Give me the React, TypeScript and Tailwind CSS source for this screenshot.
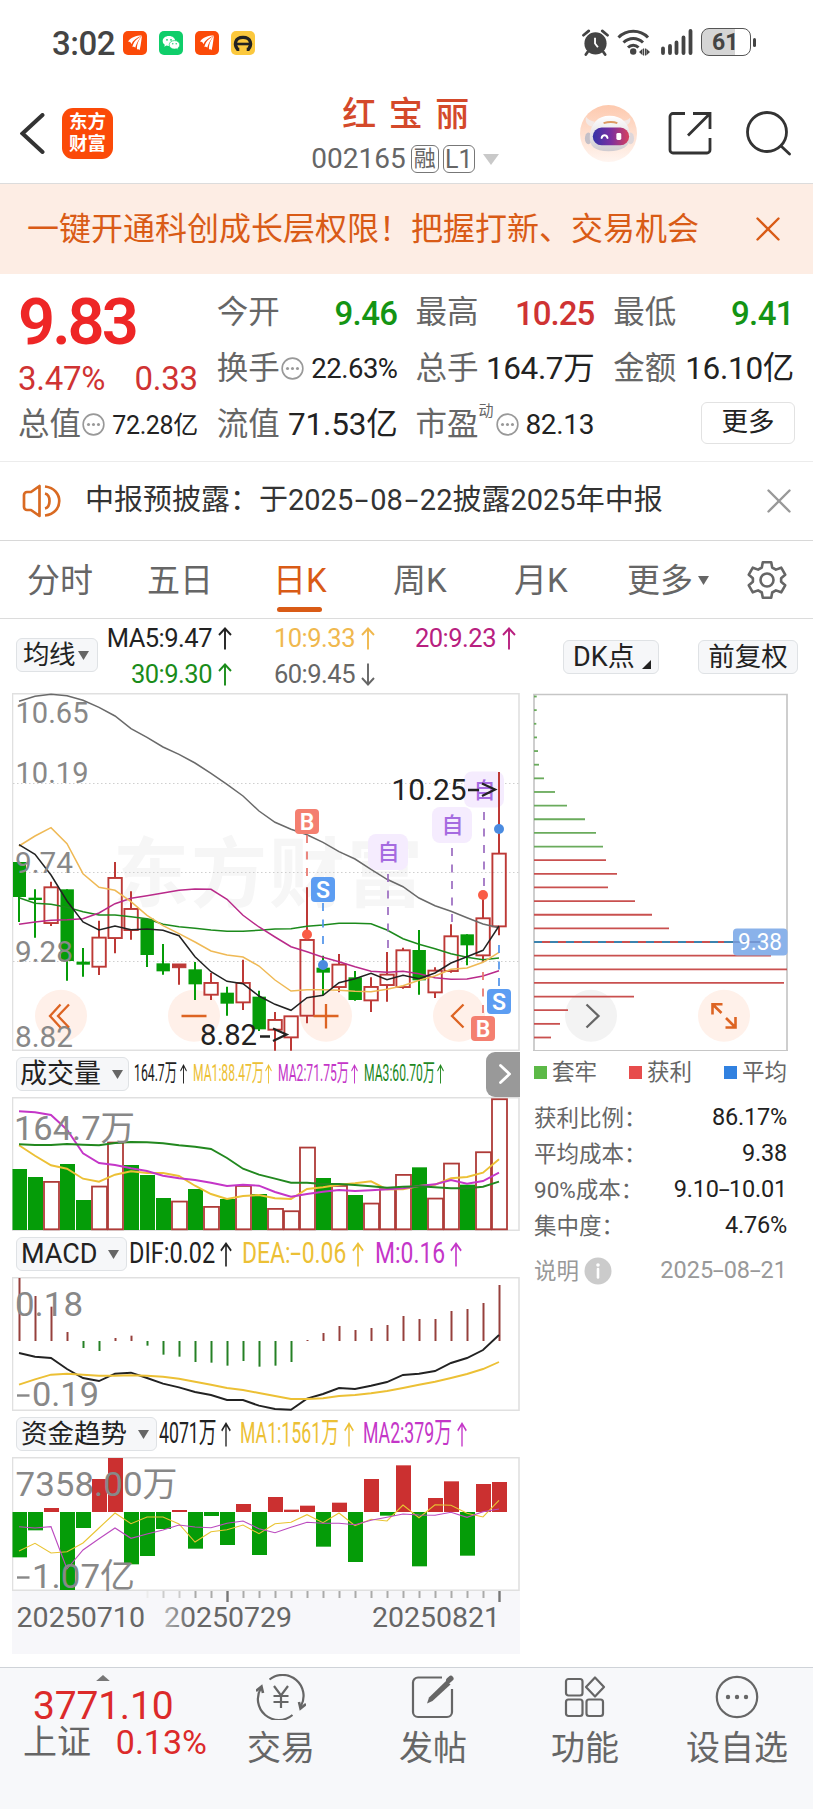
import React from "react";

const FONT = "font-['Roboto','Noto_Sans_CJK_SC',sans-serif]";

const cx = (i: number) => 19 + 16 * i;
const line = (values: number[], y: (v: number) => number) =>
  values.map((v, i) => `${cx(i)},${y(v).toFixed(1)}`).join(" ");

/* ---------- data ---------- */

type Kind = "g" | "r" | "f";
const candles: [Kind, number, number, number, number][] = [
  ["g", 186, 291, 186, 366], ["g", 293, 300, 268, 413], ["r", 261, 370, 245, 378], ["g", 268, 483, 268, 542],
  ["g", 485, 494, 444, 530], ["r", 412, 501, 362, 525], ["r", 233, 415, 186, 460], ["r", 326, 391, 274, 419],
  ["g", 356, 465, 356, 501], ["g", 490, 514, 432, 524], ["f", 492, 503, 492, 554], ["g", 508, 553, 486, 600],
  ["r", 548, 585, 519, 600], ["g", 578, 611, 560, 647], ["r", 548, 608, 479, 630], ["g", 590, 688, 572, 693],
  ["r", 659, 690, 636, 752], ["r", 648, 713, 648, 752], ["r", 419, 648, 262, 670], ["g", 503, 518, 467, 586],
  ["r", 493, 562, 462, 577], ["g", 532, 600, 513, 602], ["r", 560, 602, 532, 636], ["r", 523, 556, 456, 605],
  ["r", 450, 562, 443, 566], ["g", 450, 541, 390, 584], ["r", 511, 578, 502, 594], ["r", 408, 514, 373, 518],
  ["g", 403, 436, 403, 496], ["r", 354, 467, 286, 485], ["r", 160, 380, -84, 406],
];
const ma5 = [134, 163, 225, 303, 366, 390, 378, 389, 387, 391, 407, 470, 515, 544, 551, 588, 613, 631, 593, 586, 548, 536, 520, 539, 526, 536, 519, 489, 470, 451, 378];
const ma10 = [138, 108, 83, 131, 221, 262, 271, 305, 346, 377, 401, 426, 453, 465, 471, 498, 540, 573, 569, 569, 571, 574, 575, 568, 557, 541, 528, 508, 504, 487, 457];
const ma20 = [373, 366, 361, 359, 356, 339, 311, 295, 287, 279, 271, 267, 268, 298, 346, 381, 411, 440, 455, 472, 485, 500, 514, 517, 514, 521, 533, 538, 537, 528, 512];
const ma30 = [293, 310, 313, 322, 335, 345, 345, 350, 356, 373, 380, 385, 390, 394, 394, 391, 387, 386, 379, 375, 370, 370, 371, 390, 416, 433, 446, 461, 472, 479, 474];
const ma60 = [-296, -311, -317, -313, -299, -278, -252, -214, -188, -159, -137, -111, -80, -47, -12, 33, 67, 88, 104, 127, 155, 177, 208, 238, 260, 294, 317, 334, 353, 372, 383];

const volume: [Kind, number][] = [
  ["g", 357], ["g", 381], ["r", 393], ["g", 342], ["g", 450], ["r", 407], ["r", 275], ["g", 345], ["g", 375], ["g", 444],
  ["r", 452], ["g", 417], ["r", 468], ["g", 447], ["r", 405], ["g", 432], ["r", 474], ["r", 481], ["r", 290], ["g", 384],
  ["r", 405], ["g", 435], ["r", 458], ["r", 415], ["r", 372], ["g", 352], ["r", 443], ["r", 338], ["g", 404], ["r", 304], ["r", 145],
];
const vol1 = [286, 317, 346, 356, 386, 395, 374, 364, 369, 369, 378, 407, 432, 447, 438, 435, 445, 447, 417, 412, 404, 400, 394, 418, 418, 408, 404, 385, 381, 368, 328];
const vol2 = [184, 187, 195, 239, 310, 339, 345, 355, 363, 377, 385, 390, 398, 408, 404, 407, 426, 440, 432, 425, 420, 423, 421, 418, 415, 408, 403, 390, 401, 393, 368];
const vol3 = [283, 285, 285, 282, 284, 286, 279, 276, 277, 280, 286, 290, 297, 324, 356, 374, 386, 398, 398, 402, 402, 405, 409, 413, 410, 409, 412, 415, 415, 410, 395];

const macd = [684, 738, 770, 846, 894, 903, 864, 857, 887, 914, 920, 936, 938, 947, 933, 950, 947, 936, 870, 849, 828, 840, 834, 825, 798, 807, 807, 783, 777, 759, 705];
const dif = [909, 920, 924, 957, 984, 993, 971, 968, 984, 1001, 1012, 1026, 1035, 1050, 1050, 1067, 1077, 1079, 1046, 1032, 1014, 1017, 1007, 996, 975, 971, 963, 939, 924, 900, 855];
const dea = [1004, 988, 974, 971, 974, 977, 977, 976, 977, 980, 986, 995, 1004, 1014, 1020, 1029, 1038, 1047, 1047, 1045, 1038, 1035, 1030, 1023, 1014, 1004, 995, 984, 972, 957, 936];

const fund = [472, 391, 324, 570, 384, 237, 174, 493, 468, 387, 330, 446, 348, 435, 312, 465, 291, 329, 317, 440, 308, 486, 237, 347, 196, 499, 294, 244, 467, 252, 246];
const fund1 = [453, 430, 459, 455, 429, 384, 339, 371, 351, 351, 372, 426, 395, 389, 375, 401, 371, 367, 344, 368, 339, 377, 358, 363, 315, 353, 314, 316, 340, 351, 301];
const fund2 = [380, 384, 380, 507, 450, 416, 384, 415, 402, 390, 375, 381, 383, 370, 363, 386, 398, 382, 367, 370, 370, 374, 361, 352, 342, 345, 346, 337, 352, 335, 327];

const chips = [2.7, 2.7, 2.3, 3, 4, 5, 10, 21, 33, 51, 62, 69, 72, 83, 74, 101, 118, 135, 226, 237, 253, 250, 100, 34, 26, 17];

/* ---------- small parts ---------- */

function Arrow({ down, className = "h-[23px] w-[14px]" }: { down?: boolean; className?: string }) {
  return (
    <svg viewBox="0 0 14 23" preserveAspectRatio="none" className={`shrink-0 ${className}`} fill="none" stroke="currentColor" strokeWidth="1.9">
      <path d={down ? "M7 .5V21.5M1 15l6 6.5 6-6.5" : "M7 22.5V1.5M1 8l6-6.5L13 8"} />
    </svg>
  );
}

function Tri({ className = "" }: { className?: string }) {
  return (
    <svg viewBox="0 0 10 9" className={`h-[9px] w-[11px] shrink-0 ${className}`} preserveAspectRatio="none" fill="currentColor">
      <path d="M0 0h10L5 9z" />
    </svg>
  );
}

/* Hyphens are drawn wider than the font's own. */
function Wide({ text, dash = "px-[3px]" }: { text: string; dash?: string }) {
  return (
    <>
      {text.split("-").map((part, i) => (
        <React.Fragment key={i}>
          {i > 0 && <span className={`inline-block scale-x-[1.7] ${dash}`}>-</span>}
          {part}
        </React.Fragment>
      ))}
    </>
  );
}

function Dots() {
  return (
    <svg viewBox="0 0 24 24" className="-mt-[2px] ml-[1px] size-[23px] shrink-0">
      <circle cx="12" cy="12" r="10.8" fill="none" stroke="#999" strokeWidth="1.7" />
      <g fill="#999"><circle cx="6.8" cy="12" r="1.6" /><circle cx="12" cy="12" r="1.6" /><circle cx="17.2" cy="12" r="1.6" /></g>
    </svg>
  );
}

function Cross({ className = "" }: { className?: string }) {
  return (
    <svg viewBox="0 0 24 24" className={`size-[24px] shrink-0 ${className}`} fill="none" stroke="currentColor" strokeWidth="2.4" strokeLinecap="round">
      <path d="M1.5 1.5l21 21M22.5 1.5l-21 21" />
    </svg>
  );
}

function EastIcon() {
  return (
    <div className="size-6 rounded-[5px] bg-[#fb4a08]">
      <svg viewBox="0 0 24 24" className="size-6" fill="#fff">
        <path d="M5 10.500C8 6.500 13 4.600 19 4.600 13.600 7 10 9.200 8.300 13.200 8 11.500 7 10.500 5 10.500z" />
        <path d="M9.400 16.200C10 11.500 14 7.200 19 4.800 15.600 8.600 13.500 12 12.200 16.800 11.600 15.800 10.500 15.600 9.400 16.200z" />
        <path d="M14 18.600C13.600 13 16 8.600 19 4.800 18.300 8.600 18.200 13 16.600 19.200 16 18.200 15 18 14 18.600z" />
      </svg>
    </div>
  );
}

function Pill({ children, className = "" }: { children: React.ReactNode; className?: string }) {
  return (
    <button className={`flex h-[34px] shrink-0 items-center rounded-md border border-[#dfe2e5] bg-[#f6f7f9] text-[27px] leading-none whitespace-nowrap text-[#222] ${className}`}>
      {children}
    </button>
  );
}

function Stat({ label, value, dots, sup, className = "text-[32px] text-[#222]" }: {
  label: string; value: string; dots?: boolean; sup?: string; className?: string;
}) {
  return (
    <div className="flex h-14 items-center whitespace-nowrap">
      <span className="-ml-[1px] text-[31.500px] leading-none text-[#666]">{label}</span>
      {sup && <span className="-mt-7 w-[16px] text-[15px] leading-none text-[#666]">{sup}</span>}
      {dots && <Dots />}
      <span className={`ml-auto leading-none ${className}`}>{value}</span>
    </div>
  );
}

function Squeezed({ box, scale, text, size, arrow, className }: {
  box: string; scale: string; text: string; size: string; arrow: string; className: string;
}) {
  return (
    <div className={`flex shrink-0 items-center ${className}`}>
      <div className={box}>
        <span className={`inline-block origin-left whitespace-nowrap leading-none ${size} ${scale}`}><Wide text={text} /></span>
      </div>
      <Arrow className={arrow} />
    </div>
  );
}

function Frame({ top, bottom }: { top: number; bottom: number }) {
  return <rect x="12.500" y={top + 0.7} width="506.500" height={bottom - top - 1.4} fill="none" stroke="#e0e0e0" strokeWidth="1.600" />;
}

function Label({ x, y, w, size = 30, fill = "#888", children }: {
  x: number; y: number; w: number; size?: number; fill?: string; children: string;
}) {
  return <text x={x} y={y} fontSize={size} fill={fill} textLength={w} lengthAdjust="spacingAndGlyphs">{children}</text>;
}

function Mark({ x, y, kind }: { x: number; y: number; kind: "B" | "S" }) {
  return (
    <g>
      <rect x={x} y={y} width="24" height="25" rx="4" fill={kind === "B" ? "#f47f70" : "#5c9df2"} />
      <text x={x + 12} y={y + 20.500} textAnchor="middle" fontSize="23" fontWeight="600" fill="#fff">{kind}</text>
    </g>
  );
}

/* ---------- charts ---------- */

function PriceChart() {
  const y = (v: number) => 800 + v / 3;
  return (
    <svg viewBox="12 693 508 358" className="block h-[358px] w-[508px]">
      <text x="113" y="901" fontSize="76" fontWeight="700" fill="#f6f6f6" textLength="310">东方财富</text>
      <Frame top={693} bottom={1051} />
      <g stroke="#cfcfcf" strokeWidth="1.200" strokeDasharray="1.500 2.500">
        <path d="M13 783.500H519M13 872.500H519M13 961.500H519" />
      </g>
      {[61, 194, 326, 459].map((x) => <circle key={x} cx={x} cy="1015.700" r="26" fill="#fff0e9" />)}
      <g fill="#f5ecfe">
        <rect x="368" y="834" width="40" height="36" rx="8" />
        <rect x="432" y="807" width="40" height="36" rx="8" />
        <rect x="464" y="771.500" width="40" height="36" rx="8" />
      </g>
      <g fontSize="22" fill="#a56be0" fontWeight="500" textAnchor="middle">
        <text x="388.500" y="860">自</text><text x="452.500" y="833">自</text><text x="484.500" y="798">自</text>
      </g>
      {candles.map(([k, t, b, hi, lo], i) => {
        const c = k === "g" ? "#059c08" : "#bd3936";
        return (
          <g key={i}>
            <path d={`M${cx(i)} ${y(hi)}V${k === "r" ? y(t) : y(lo)}${k === "r" ? `M${cx(i)} ${y(b)}V${y(lo)}` : ""}`} stroke={c} strokeWidth="2" />
            {k === "r"
              ? <rect x={cx(i) - 6.600} y={y(t) + 0.300} width="13.400" height={y(b) - y(t) - 0.600} fill="none" stroke={c} strokeWidth="1.900" />
              : <rect x={Math.max(13, cx(i) - 6.500)} y={y(t)} width={i === 0 ? 13 : 13.400} height={y(b) - y(t)} fill={c} stroke={c} strokeWidth={k === "f" ? 1 : 0} />}
          </g>
        );
      })}
      <g fill="none" strokeWidth="1.500">
        <polyline points={line(ma60, y)} stroke="#6a6a6a" />
        <polyline points={line(ma30, y)} stroke="#1c8a1c" />
        <polyline points={line(ma20, y)} stroke="#b92a8a" />
        <polyline points={line(ma10, y)} stroke="#efb955" />
        <polyline points={line(ma5, y)} stroke="#222" />
      </g>
      <g strokeWidth="1.700" strokeDasharray="8 8.500">
        <path d="M388 870V952M452 844V925M484 808V890" stroke="#9b6bc0" strokeDashoffset="-4" />
        <path d="M307 835V880M483 972V1015" stroke="#e8736a" />
        <path d="M323 903V948M499 945V988" stroke="#4f93ea" />
      </g>
      <g fill="#fa5c45"><circle cx="307" cy="934.500" r="5" /><circle cx="483" cy="895" r="5" /></g>
      <g fill="#4a8be0"><circle cx="323" cy="965" r="5" /><circle cx="499" cy="829" r="5" /></g>
      <Label x={15.5} y={722.5} w={73}>10.65</Label>
      <Label x={15.5} y={782.5} w={73}>10.19</Label>
      <Label x={15} y={872.5} w={58}>9.74</Label>
      <Label x={15} y={961.5} w={58}>9.28</Label>
      <Label x={15} y={1046.5} w={58}>8.82</Label>
      <Label x={391.5} y={800} w={75} fill="#222">10.25</Label>
      <Label x={200} y={1045} w={57} fill="#222">8.82</Label>
      <g fill="none" stroke="#222" strokeWidth="2.300">
        <path d="M468 790H479M482 783.500L495 789.500 482 796" />
        <path d="M260 1036.500H270M273 1028.500L286.500 1034.500 273 1041" />
      </g>
      <g fill="none" stroke="#dd6423" strokeWidth="2.300">
        <path d="M60.500 1004.500L50 1016l10.500 11.500M69 1004.500L58 1016l11 11.500" />
        <path d="M181.500 1016H206.500M313.500 1016H338.500M326 1004V1028.500" />
        <path d="M463.500 1004.500L452 1016l11.500 11.500" />
      </g>
      <Mark x={295} y={809} kind="B" />
      <Mark x={311} y={877} kind="S" />
      <Mark x={471} y={1016} kind="B" />
      <Mark x={487} y={989} kind="S" />
    </svg>
  );
}

function VolumeChart() {
  const y = (v: number) => 1050 + v / 3;
  return (
    <svg viewBox="12 1097 508 134" className="block h-[134px] w-[508px]">
      <Frame top={1097} bottom={1231} />
      {volume.map(([k, v], i) =>
        k === "g"
          ? <rect key={i} x={Math.max(12.500, cx(i) - 7)} y={y(v)} width={i === 0 ? 14.500 : 15} height={1230 - y(v)} fill="#059c08" />
          : <rect key={i} x={cx(i) - 7} y={y(v) + 0.900} width="15" height={1229.300 - y(v) - 0.900} fill="none" stroke="#ae3b38" strokeWidth="1.800" />
      )}
      <g fill="none" strokeWidth="1.900">
        <polyline points={line(vol1, y)} stroke="#ecc035" />
        <polyline points={line(vol2, y)} stroke="#c436c8" />
        <polyline points={line(vol3, y)} stroke="#22881f" />
      </g>
      <Label x={14} y={1139.5} w={121} size={34}>164.7万</Label>
    </svg>
  );
}

function MacdChart() {
  const y = (v: number) => 1050 + v / 3;
  return (
    <svg viewBox="12 1277 508 134" className="block h-[134px] w-[508px]">
      <Frame top={1277} bottom={1411} />
      {macd.map((v, i) => (
        <path key={i} d={`M${cx(i) + 0.5} 1341V${y(v)}`} stroke={v > 873 ? "#258025" : "#96403c"} strokeWidth="2" />
      ))}
      <g fill="none" strokeWidth="1.900">
        <polyline points={line(dif, y)} stroke="#222" />
        <polyline points={line(dea, y)} stroke="#ecc035" />
      </g>
      <Label x={15} y={1315.500} w={68} size={34}>0.18</Label>
      <path d="M17 1395.500H29.500" stroke="#888" strokeWidth="2.400" />
      <Label x={32} y={1405.500} w={67} size={34}>0.19</Label>
    </svg>
  );
}

function FundChart() {
  const y = (v: number) => 1400 + v / 3;
  return (
    <svg viewBox="12 1457 508 134" className="block h-[134px] w-[508px]">
      <Frame top={1457} bottom={1591} />
      {fund.map((v, i) => (
        <rect key={i} x={Math.max(12.500, cx(i) - 7)} y={Math.min(1512, y(v))} width={i === 0 ? 14.500 : 15} height={Math.abs(1512 - y(v))} fill={v > 336 ? "#059c08" : "#cb3030"} />
      ))}
      <g fill="none" strokeWidth="1.100">
        <polyline points={line(fund1, y)} stroke="#e9c432" />
        <polyline points={line(fund2, y)} stroke="#bb4abf" />
      </g>
      <Label x={15.5} y={1496} w={162} size={34}>7358.00万</Label>
      <path d="M17 1577.500H29.500" stroke="#888" strokeWidth="2.400" />
      <Label x={32} y={1587.500} w={103} size={34}>1.07亿</Label>
    </svg>
  );
}

function DateAxis() {
  return (
    <svg viewBox="12 1591 508 63" className="block h-[63px] w-[508px] bg-[#f7f7fa]">
      <defs>
        <linearGradient id="fade" x1="164" x2="190" y1="0" y2="0" gradientUnits="userSpaceOnUse">
          <stop offset="0" stopColor="#b5b5b5" /><stop offset="1" stopColor="#666" />
        </linearGradient>
      </defs>
      {Array.from({ length: 23 }, (_, k) => k + 8).map((i) => {
        const bold = i === 13 || i === 30;
        return <path key={i} d={`M${cx(i) + 0.5} 1591V${bold ? 1602 : 1598}`} stroke={bold ? "#777" : i < 9 ? "#ececec" : i < 11 ? "#ccc" : "#aaa"} strokeWidth={bold ? 2.400 : 2} />;
      })}
      <Label x={16.5} y={1627} w={128.5} size={28} fill="#666">20250710</Label>
      <Label x={164} y={1627} w={128} size={28} fill="url(#fade)">20250729</Label>
      <Label x={372} y={1627} w={128} size={28} fill="#666">20250821</Label>
    </svg>
  );
}

function ChipChart() {
  return (
    <svg viewBox="533 693 256 358" className="block h-[358px] w-[256px]">
      <path d="M534 1051V694.500H787V1051" fill="none" stroke="#c6c6c6" strokeWidth="1.700" />
      <path d="M533 1050.500H788" stroke="#c6c6c6" strokeWidth="1" />
      <circle cx="591" cy="1015.700" r="26" fill="#f3f3f3" />
      <circle cx="724" cy="1015.700" r="26" fill="#fff1ea" />
      {chips.map((w, i) => (
        <path key={i} d={`M534 ${696.500 + 13.640 * i}h${w}`} stroke={i < 12 ? "#6aab5c" : "#c9504f"} strokeWidth="1.800" />
      ))}
      <path d="M534 942H733" stroke="#3b83ae" strokeWidth="1.900" strokeDasharray="8 8" />
      <path d="M724 942H740" stroke="#3b83ae" strokeWidth="1.900" />
      <rect x="733" y="928.500" width="54.500" height="27" rx="4" fill="#8ab2ea" />
      <path d="M733 942H760" stroke="#6b8cc8" strokeWidth="1.500" />
      <Label x={738} y={950} w={44} size={23} fill="#fff">9.38</Label>
      <path d="M586.500 1004.500L598.500 1016l-12 11.500" fill="none" stroke="#666" strokeWidth="2.300" />
      <g fill="none" stroke="#dd6423" strokeWidth="2.600">
        <path d="M722.500 1004.200H712.500V1014.500M712.500 1004.200L721.500 1013" />
        <path d="M725.500 1027.500H735.500V1017M735.500 1027.500L726 1018" />
      </g>
    </svg>
  );
}

/* ---------- sections ---------- */

function StatusBar() {
  return (
    <div className="flex h-[84px] items-center pt-[2px] pl-[52px] text-[#444]">
      <span className="w-[71px] text-[33px] leading-none font-medium tracking-[-0.5px]">3:02</span>
      <div className="flex gap-3">
        <EastIcon />
        <div className="size-6 rounded-[5px] bg-[#0fce6a]">
          <svg viewBox="0 0 24 24" className="size-6">
            <path fill="#fff" d="M10 5c-3.800 0-6.300 2.300-6.300 5 0 1.600.8 2.900 2.100 3.800l-.5 1.900 2.100-1.100c.8.300 1.700.4 2.600.4 3.600 0 6.200-2.200 6.200-5S13.700 5 10 5z" />
            <path fill="#fff" stroke="#0fce6a" strokeWidth=".7" d="M15.500 9.600c-3.200 0-5.300 1.900-5.300 4.200 0 2.400 2.200 4.300 5.300 4.300.7 0 1.300-.1 1.900-.3l1.800 1-.4-1.700c1.200-.8 1.900-1.900 1.900-3.300 0-2.300-2.100-4.200-5.200-4.200z" />
            <g fill="#0fce6a"><circle cx="8" cy="8.800" r=".9" /><circle cx="12" cy="8.800" r=".9" /><circle cx="13.800" cy="12.700" r=".7" /><circle cx="17.200" cy="12.700" r=".7" /></g>
          </svg>
        </div>
        <EastIcon />
        <div className="size-6 rounded-[5px] bg-[#fbc83d]">
          <svg viewBox="0 0 24 24" className="size-6" fill="none" stroke="#222" strokeWidth="3.200">
            <path d="M8.300 18.300H6.500C3 14 3.500 6.300 12 6.300s9 7.700 5.500 12H15.700" /><path d="M5 13h14" strokeWidth="2.600" />
          </svg>
        </div>
      </div>
      <div className="-mt-[2px] ml-auto flex items-center pr-[57px]">
        <svg viewBox="0 0 28 28" className="h-[28px] w-[27px]" fill="#444">
          <circle cx="14" cy="15.500" r="11.500" />
          <path d="M1.500 7L7 2.500M26.500 7L21 2.500M6 24l-2 3M22 24l2 3" stroke="#444" strokeWidth="2.800" strokeLinecap="round" />
          <path d="M13.500 9.500v6l3 4" fill="none" stroke="#fff" strokeWidth="1.900" />
        </svg>
        <svg viewBox="0 0 34 28" className="ml-[8px] h-[28px] w-[34px]" fill="none" stroke="#444" strokeWidth="3">
          <path d="M1.500 9.500c8-8.300 21.500-8.300 29.500 0M6.500 14.500c5.500-5.500 14-5.500 19.500 0M11 19.500c3-3 7.500-3 10.500 0" />
          <circle cx="16.200" cy="23.500" r="3.200" fill="#444" stroke="none" />
          <path d="M22 24l3.500-3.300v6.600zM33 24l-3.500-3.300v6.600zM26 20.500h1.200v7H26zM28 20.500h1.200v7H28z" fill="#444" stroke="none" />
        </svg>
        <svg viewBox="0 0 32 28" className="ml-[10px] h-[28px] w-[32px]" stroke="#444" strokeWidth="3.800" strokeLinecap="round">
          <path d="M2 25v-4.500M9 25v-7M15.500 25V14.500M22.500 25V9.500M29.500 25V3" />
        </svg>
        <div className="ml-[8px] flex h-[28px] w-[50px] items-center overflow-hidden rounded-[8px] border-[1.5px] border-[#555] bg-linear-to-r from-[#d5d5d5] from-68% to-white to-68% pl-[10px] text-[23px] leading-none font-bold">61</div>
        <div className="ml-[2px] h-[9px] w-[3px] rounded-sm bg-[#444]" />
      </div>
    </div>
  );
}

function Header() {
  return (
    <header className="flex h-[100px] border-b border-[#dcdcdc]">
      <div className="flex w-[300px] items-center gap-[17px] pb-px pl-[20px]">
        <svg viewBox="0 0 25 41" className="h-[41px] w-[25px]" fill="none" stroke="#333" strokeWidth="4" strokeLinecap="round">
          <path d="M22.500 2L2.500 20.500l20 18.500" />
        </svg>
        <div className="flex size-[51px] flex-col items-center justify-center gap-[4px] rounded-[11px] bg-[#fb4a08] text-[18.500px] leading-[18px] font-bold text-white">
          <span>东方</span><span>财富</span>
        </div>
      </div>
      <div className="flex w-[212px] flex-col items-center">
        <h1 className="mt-[13px] text-[34px] leading-[34px] font-medium tracking-[12.500px] whitespace-nowrap text-[#d4492a]"><span className="-mr-[12px]">红宝丽</span></h1>
        <div className="mt-[13px] -ml-[2px] flex items-center whitespace-nowrap text-[#666]">
          <span className="text-[28px] leading-[30px]">002165</span>
          <span className="ml-[5px] flex h-[28px] w-[28px] items-center justify-center rounded-[6px] border-[1.5px] border-[#777] text-[22px] leading-none">融</span>
          <span className="ml-[4px] flex h-[28px] w-[32px] items-center justify-center rounded-[6px] border-[1.5px] border-[#777] text-[25px] leading-none">L1</span>
          <svg viewBox="0 0 16 11" className="ml-[8px] h-[11px] w-[16px]" fill="#c9c9c9"><path d="M0 0h16L8 11z" /></svg>
        </div>
      </div>
      <div className="flex flex-1 items-center justify-end pr-[22px] pb-[1px]">
        <svg viewBox="0 0 58 58" className="size-[57px]">
          <defs>
            <linearGradient id="halo" x1="0" x2="0" y1="0" y2="1"><stop offset="0" stopColor="#fdc9ae" /><stop offset="1" stopColor="#fff5f0" /></linearGradient>
            <linearGradient id="visor" x1="0" x2="1"><stop offset="0" stopColor="#3434a8" /><stop offset=".5" stopColor="#7a2fa0" /><stop offset="1" stopColor="#d8405c" /></linearGradient>
            <linearGradient id="shell" x1="0" x2="0" y1="0" y2="1"><stop offset="0" stopColor="#fff" /><stop offset="1" stopColor="#cfcbd0" /></linearGradient>
          </defs>
          <circle cx="29" cy="29" r="29" fill="url(#halo)" />
          <ellipse cx="8.500" cy="34" rx="3.500" ry="6" fill="#c4c0c8" /><ellipse cx="51.500" cy="34" rx="3.500" ry="6" fill="#ddd6da" />
          <path d="M12 22c-5-1-7-5-6-10 2 3 5 4 9 5zM46 21c4-1 6-4 5-8-2 2-4 3-7 3z" fill="#f3e9e6" />
          <path d="M30 11c13 0 20 8 21 20 .6 11-8 16-22 16S9 42 10 31c1-12 8-20 20-20z" fill="url(#shell)" />
          <path d="M24 18.500c5-1.500 10-1.500 14 0" stroke="#dd9a62" strokeWidth="2" fill="none" />
          <rect x="13" y="23" width="37" height="18" rx="9" fill="url(#visor)" />
          <path d="M22 33.500c1-3.500 5-3.500 6 0" stroke="#fff" strokeWidth="2" fill="none" strokeLinecap="round" />
          <rect x="37" y="28.500" width="5" height="7" rx="1.500" fill="#fff" />
        </svg>
        <svg viewBox="0 0 44 44" className="ml-[31px] size-[44px]" fill="none" stroke="#333" strokeWidth="2.800">
          <path d="M17 2.500H5A3 3 0 0 0 2 5.500V39a3 3 0 0 0 3 3H39a3 3 0 0 0 3-3V27M25 2.500H42V18M42 2.500L20 24.500" />
        </svg>
        <svg viewBox="0 0 45 45" className="ml-[34px] size-[45px]" fill="none" stroke="#333" strokeWidth="2.800" strokeLinecap="round">
          <circle cx="21" cy="21" r="19.500" /><path d="M35 35l8.500 8" />
        </svg>
      </div>
    </header>
  );
}

function Quote() {
  return (
    <section className="flex h-[188px] border-b border-[#ececec] px-[19px] pt-[11px]">
      <div className="w-[179px]">
        <div className="flex h-[72px] items-center text-[65px] leading-none font-semibold tracking-[-3px] text-[#ee2626]"><span className="mt-[3px] -ml-[1px]">9.83</span></div>
        <div className="flex h-[40px] items-center justify-between pt-[3px] text-[33px] leading-none tracking-[-0.3px] text-[#cf3333]"><span className="-ml-px">3.47%</span><span>0.33</span></div>
        <Stat label="总值" dots value="72.28亿" className="text-[25px] text-[#222] tracking-[-0.4px]" />
      </div>
      <div className="ml-[20px] w-[180px]">
        <Stat label="今开" value="9.46" className="text-[33px] font-medium tracking-[-0.6px] text-[#149414]" />
        <Stat label="换手" dots value="22.63%" className="text-[27.500px] tracking-[-0.5px] text-[#222]" />
        <Stat label="流值" value="71.53亿" className="text-[31.500px] tracking-[-0.2px] text-[#222]" />
      </div>
      <div className="ml-[19px] w-[178px]">
        <Stat label="最高" value="10.25" className="text-[33px] font-medium tracking-[-1px] text-[#cf3333]" />
        <Stat label="总手" value="164.7万" className="text-[31.500px] tracking-[-0.4px] text-[#222]" />
        <Stat label="市盈" sup="动" dots value="82.13" className="text-[28px] tracking-[-0.3px] text-[#222]" />
      </div>
      <div className="ml-[20px] w-[180px]">
        <Stat label="最低" value="9.41" className="text-[33px] font-medium tracking-[-0.6px] text-[#149414]" />
        <Stat label="金额" value="16.10亿" className="text-[31.500px] tracking-[-0.3px] text-[#222]" />
        <button className="mt-[5px] -mr-[1px] ml-auto flex h-[42px] w-[94px] items-center justify-center rounded-md border border-[#e2e2e2] text-[26.500px] leading-none text-[#222]"><span className="-mt-[2px]">更多</span></button>
      </div>
    </section>
  );
}

function Tabs() {
  const tabs: [string, string][] = [["分时", "w-[120px]"], ["五日", "w-[126px]"], ["日K", "w-[120px]"], ["周K", "w-[121px]"], ["月K", "w-[114px]"]];
  return (
    <nav className="flex h-[78px] items-center border-b border-[#dcdcdc] pt-[2px] pl-[27px] text-[33px] leading-none text-[#666]">
      {tabs.map(([t, w], i) => (
        <div key={t} className={`shrink-0 ${w}`}>
          <div className={`relative inline-block ${i === 2 ? "text-[#d95b16]" : ""}`}>
            <span>{t}</span>
            {i === 2 && <span className="absolute -bottom-[15px] left-[4px] h-[5px] w-[45px] rounded-full bg-[#d95b16]" />}
          </div>
        </div>
      ))}
      <span className="-ml-[1px]">更多</span>
      <Tri className="ml-[5px]" />
      <svg viewBox="0 0 40 40" className="-mt-[2px] ml-[38px] size-[40px] shrink-0" fill="none" stroke="#666" strokeWidth="2.600" strokeLinejoin="round">
        <path d="M15.800 2.200h8.400l1 5.300 3.700 2.100 5.300-1.900 4 7-4.100 3.500v3.600l4.100 3.500-4 7-5.300-1.900-3.700 2.100-1 5.300h-8.400l-1-5.300-3.700-2.100-5.300 1.900-4-7 4.100-3.500v-3.600L1.800 14.700l4-7 5.300 1.900 3.700-2.100z" />
        <circle cx="20" cy="20" r="6.500" />
      </svg>
    </nav>
  );
}

function MaItem({ text, down, className }: { text: string; down?: boolean; className: string }) {
  return (
    <div className={`flex items-center justify-end gap-[6px] ${className}`}>
      <span className="text-[25.500px] leading-none tracking-[-0.5px]">{text}</span><Arrow down={down} className="h-[23px] w-[14px] -mt-[1px]" />
    </div>
  );
}

function Toolbar() {
  return (
    <div className="flex h-[73px] pl-[16px]">
      <Pill className="mt-[18px] w-[82px] pl-[6px]"><span className="text-[26.500px] tracking-[-0.5px]">均线</span><Tri className="ml-[3px] text-[#666]" /></Pill>
      <div className="mt-[1px] grid h-[72px] grid-cols-[134px_143px_141px] grid-rows-2">
        <MaItem text="MA5:9.47" className="text-[#222]" />
        <MaItem text="10:9.33" className="text-[#f0b84e]" />
        <MaItem text="20:9.23" className="text-[#b8207f]" />
        <MaItem text="30:9.30" className="text-[#1a8c1a]" />
        <MaItem text="60:9.45" down className="text-[#666]" />
      </div>
      <Pill className="mt-[20px] ml-[47px] w-[96px] pl-[9px]">
        <span className="text-[27px]">DK点</span>
        <svg viewBox="0 0 9 9" className="mt-[14px] ml-[7px] size-[9px] shrink-0" fill="#222"><path d="M9 0v9H0z" /></svg>
      </Pill>
      <Pill className="mt-[20px] ml-[39px] w-[100px] justify-center"><span className="text-[26.500px]">前复权</span></Pill>
    </div>
  );
}

function ChipPanel() {
  const rows = [["获利比例：", "86.17%"], ["平均成本：", "9.38"], ["90%成本：", "9.10-10.01"], ["集中度：", "4.76%"]];
  return (
    <aside className="ml-[13px] w-[256px]">
      <ChipChart />
      <div className="flex h-[42px] items-center justify-between pt-[1px] pr-[2px] pl-[1px] text-[22.500px] leading-none text-[#666]">
        {[["套牢", "bg-[#5cb947]"], ["获利", "bg-[#e74c4c]"], ["平均", "bg-[#3181e0]"]].map(([t, c]) => (
          <span key={t} className="flex items-center gap-[5px]"><i className={`block size-[13px] ${c}`} />{t}</span>
        ))}
      </div>
      <div className="mt-[7px] pr-[2px] pl-[1px] text-[22.500px] leading-none">
        {rows.map(([k, v]) => (
          <div key={k} className="flex h-9 items-center justify-between whitespace-nowrap">
            <span className="text-[#666]">{k}</span><span className="text-[23.500px] tracking-[-0.2px] text-[#222]"><Wide text={v} dash="px-[2px]" /></span>
          </div>
        ))}
        <div className="mt-[5px] flex h-[44px] items-center text-[22.500px] text-[#999]">
          <span>说明</span>
          <svg viewBox="0 0 28 28" className="ml-[5px] size-[28px]"><circle cx="14" cy="14" r="13.500" fill="#cbcbcb" /><path d="M14 12v8.500" stroke="#fff" strokeWidth="2.600" strokeLinecap="round" /><circle cx="14" cy="8" r="1.800" fill="#fff" /></svg>
          <span className="ml-auto text-[23.500px]"><Wide text="2025-08-21" dash="px-[2px]" /></span>
        </div>
      </div>
    </aside>
  );
}

function BottomBar() {
  const s = { fill: "none", stroke: "#666", strokeWidth: 2.2 } as const;
  const items = [
    { t: "交易", icon: (
      <svg viewBox="0 0 50 46" className="h-[46px] w-[50px]" {...s}>
        <path d="M13.500 5.500A21 21 0 0 1 45 32M36.500 41A21 21 0 0 1 5 14" /><path d="M0 17l5.500-4.500L7 19M50 30l-5.500 4.500L43 28" strokeWidth="2.600" />
        <path d="M18 12l7 9.500 7-9.500M25 21.500V34M17.500 22h15M17.500 28h15" />
      </svg>) },
    { t: "发帖", icon: (
      <svg viewBox="0 0 44 46" className="h-[46px] w-[44px]" {...s}>
        <path d="M31 3.500H7a5 5 0 0 0-5 5V38a5 5 0 0 0 5 5H36a5 5 0 0 0 5-5V15" /><path d="M16 29.500l2-6L35.500 6.500l4 4L21.500 27z" fill="#666" stroke="none" /><path d="M37.800 6.300l2-1.800" strokeWidth="5.500" strokeLinecap="round" />
      </svg>) },
    { t: "功能", icon: (
      <svg viewBox="0 0 42 46" className="h-[46px] w-[42px]" {...s}>
        <rect x="2" y="5" width="16.500" height="16.500" rx="2.500" /><rect x="2" y="25.500" width="16.500" height="16.500" rx="2.500" /><rect x="22.500" y="25.500" width="16.500" height="16.500" rx="2.500" /><path d="M31 3.500l9 9.500-9 9.500-9-9.500z" strokeLinejoin="round" />
      </svg>) },
    { t: "设自选", icon: (
      <svg viewBox="0 0 46 46" className="size-[46px]" {...s}>
        <circle cx="23" cy="23" r="20.200" /><g fill="#666" stroke="none"><circle cx="14" cy="23" r="2.200" /><circle cx="23" cy="23" r="2.200" /><circle cx="32" cy="23" r="2.200" /></g>
      </svg>) },
  ];
  return (
    <footer className="mt-[13px] flex h-[143px] border-t border-[#cfd3d8] bg-[#f7f8fa]">
      <div className="w-[205px] shrink-0">
        <svg viewBox="0 0 16 7" className="mt-[7px] ml-[95px] h-[6px] w-[16px]" fill="#777"><path d="M8 0l8 7H0z" /></svg>
        <div className="mt-[7px] pl-[33px] text-[39px] leading-[36px] tracking-[-0.2px] text-[#dc2a2a]">3771.10</div>
        <div className="flex items-center leading-[36px]"><span className="pl-[23px] text-[34px] text-[#666]">上证</span><span className="-mr-[2px] ml-auto text-[34px] text-[#dc2a2a]">0.13%</span></div>
      </div>
      <div className="flex">
        {items.map(({ t, icon }) => (
          <div key={t} className="flex w-[152px] shrink-0 flex-col items-center">
            <div className="mt-[6px]">{icon}</div>
            <span className="mt-[10px] text-[34px] leading-[36px] whitespace-nowrap text-[#666]">{t}</span>
          </div>
        ))}
      </div>
    </footer>
  );
}

export default function App() {
  return (
    <div className={`h-[1809px] w-[813px] overflow-hidden bg-white ${FONT}`}>
      <StatusBar />
      <Header />
      <div className="flex h-[90px] items-center justify-between bg-[#fdede4] pr-[33px] pl-[27px] text-[32px] leading-none text-[#d95b16]">
        <span className="whitespace-nowrap">一键开通科创成长层权限！把握打新、交易机会</span>
        <Cross />
      </div>
      <Quote />
      <div className="flex h-[79px] items-center border-b border-[#d8d8d8] pr-[22px] pb-px pl-[22px] text-[29px] leading-none text-[#333]">
        <svg viewBox="0 0 39 34" className="h-[34px] w-[39px]" fill="none" stroke="#d96a22" strokeWidth="2.700" strokeLinejoin="round">
          <path d="M2 11a3 3 0 0 1 3-3H9L17.500 2V32L9 26H5a3 3 0 0 1-3-3z" /><path d="M23 9.500c6 1.500 6 13.500 0 15M23 2.500c19 2 19 27 0 29" />
        </svg>
        <span className="ml-[24px] whitespace-nowrap"><Wide text="中报预披露：于2025-08-22披露2025年中报" dash="px-[4.500px]" /></span>
        <Cross className="ml-auto text-[#999]" />
      </div>
      <Tabs />
      <div className="h-px" />
      <Toolbar />
      <div className="flex pl-[12px]">
        <div className="w-[508px]">
          <PriceChart />
          <div className="flex h-[46px] items-center pl-[4px]">
            <Pill className="w-[113px] pl-[3px]"><span>成交量</span><Tri className="ml-[11px] text-[#666]" /></Pill>
            <div className="ml-[5px] flex gap-[6px]">
              <Squeezed text="164.7万" box="w-[46px]" size="text-[24px]" scale="scale-x-[.51]" arrow="h-[20px] w-[7px]" className="text-[#222]" />
              <Squeezed text="MA1:88.47万" box="w-[72px]" size="text-[24px]" scale="scale-x-[.505]" arrow="h-[20px] w-[7px]" className="text-[#ecc035]" />
              <Squeezed text="MA2:71.75万" box="w-[73px]" size="text-[24px]" scale="scale-x-[.505]" arrow="h-[20px] w-[7px]" className="text-[#c436c8]" />
              <Squeezed text="MA3:60.70万" box="w-[73px]" size="text-[24px]" scale="scale-x-[.505]" arrow="h-[20px] w-[7px]" className="text-[#22881f]" />
            </div>
            <button className="ml-auto flex h-[45px] w-[34px] items-center justify-center rounded-l-[9px] bg-[#999]">
              <svg viewBox="0 0 12 20" className="ml-[3px] h-[20px] w-[12px]" fill="none" stroke="#fff" strokeWidth="2.800" strokeLinecap="round"><path d="M1.500 1.500L10.500 10l-9 8.500" /></svg>
            </button>
          </div>
          <VolumeChart />
          <div className="flex h-[46px] items-center pl-[4px]">
            <Pill className="w-[111px] pl-[4px]"><span className="text-[27px]">MACD</span><Tri className="ml-[10px] text-[#666]" /></Pill>
            <div className="ml-[2px] flex">
              <Squeezed text="DIF:0.02" box="w-[91px]" size="text-[29px]" scale="scale-x-[.81]" arrow="h-[25px] w-[12px]" className="text-[#222]" />
              <Squeezed text="DEA:-0.06" box="ml-[10px] w-[110px]" size="text-[29px]" scale="scale-x-[.79]" arrow="h-[25px] w-[12px]" className="text-[#ecc035]" />
              <Squeezed text="M:0.16" box="ml-[11px] w-[75px]" size="text-[29px]" scale="scale-x-[.79]" arrow="h-[25px] w-[12px]" className="text-[#c436c8]" />
            </div>
          </div>
          <MacdChart />
          <div className="flex h-[46px] items-center pl-[4px]">
            <Pill className="w-[141px] pl-[4px]"><span className="text-[26.500px]">资金趋势</span><Tri className="ml-[11px] text-[#666]" /></Pill>
            <div className="ml-[2px] flex">
              <Squeezed text="4071万" box="w-[62px]" size="text-[29px]" scale="scale-x-[.61]" arrow="h-[25px] w-[10px]" className="text-[#222]" />
              <Squeezed text="MA1:1561万" box="ml-[9px] w-[104px]" size="text-[29px]" scale="scale-x-[.61]" arrow="h-[25px] w-[10px]" className="text-[#ecc035]" />
              <Squeezed text="MA2:379万" box="ml-[9px] w-[94px]" size="text-[29px]" scale="scale-x-[.61]" arrow="h-[25px] w-[10px]" className="text-[#c436c8]" />
            </div>
          </div>
          <FundChart />
          <DateAxis />
        </div>
        <ChipPanel />
      </div>
      <BottomBar />
    </div>
  );
}
